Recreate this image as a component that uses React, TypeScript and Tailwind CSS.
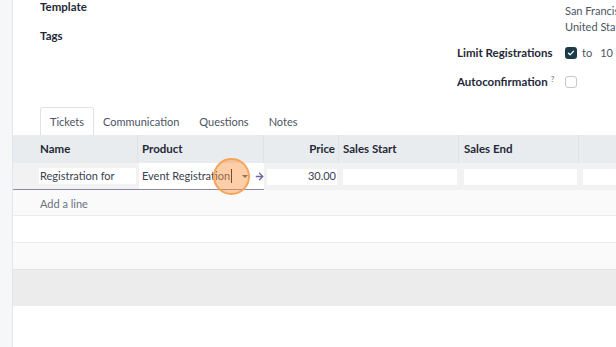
import { ArrowRight } from "lucide-react"

const cols = [
  { label: "Name", w: "w-[125px]", cls: "pl-[27px]" },
  { label: "Product", w: "w-[126px]", cls: "pl-[4px]" },
  { label: "Price", w: "w-[75px]", cls: "justify-end pr-[3px]" },
  { label: "Sales Start", w: "w-[120px]", cls: "pl-[4px]" },
  { label: "Sales End", w: "w-[120px]", cls: "pl-[5px]" },
  { label: "", w: "w-[120px]", cls: "pl-[4px]" },
]

export default function App() {
  return (
    <div
      className="flex h-[347px] w-[616px] overflow-hidden whitespace-nowrap bg-white text-[11px] text-[#374151]"
      style={{ fontFamily: "Lato, 'Open Sans', sans-serif" }}
    >
      {/* sidebar edge */}
      <div className="w-[13px] shrink-0 border-r border-[#e3e5ea] bg-[#f6f7f9]" />

      <div className="flex min-w-0 flex-1 flex-col">
        {/* form fields */}
        <div className="flex h-[107px] shrink-0">
          <div className="flex w-[444px] shrink-0 flex-col pl-[27px]">
            <div className="-mt-[2px] h-[29px] text-[11.5px] font-bold text-[#1f2937]">Template</div>
            <div className="text-[11.5px] font-bold text-[#1f2937]">Tags</div>
          </div>
          <div className="flex min-w-0 flex-1 flex-col overflow-hidden">
            <div className="pl-[108px] pt-[3px] leading-[16px] text-[#4b5563]">
              <div>San Francisco</div>
              <div>United States</div>
            </div>
            <div className="mt-[10px] flex h-[16px] items-center">
              <div className="w-[108px] text-[11.5px] font-bold text-[#1f2937]">Limit Registrations</div>
              <span className="flex h-[12px] w-[12px] items-center justify-center rounded-[3px] bg-[#1c3a47]">
                <svg viewBox="0 0 12 12" className="h-[10px] w-[10px]">
                  <path d="M3 6.2 5 8.2 9 3.8" fill="none" stroke="white" strokeWidth="1.6" strokeLinecap="round" strokeLinejoin="round" />
                </svg>
              </span>
              <span className="ml-[5px] text-[#4b5563]">to</span>
              <span className="ml-[8px] text-[#4b5563]">10</span>
            </div>
            <div className="mt-[13px] flex h-[16px] items-center">
              <div className="w-[108px] text-[11.5px] font-bold text-[#1f2937]">
                Autoconfirmation<sup className="ml-[3px] text-[8px] font-normal text-[#6b7280]">?</sup>
              </div>
              <span className="h-[12px] w-[12px] rounded-[3px] border border-[#c4c8ce] bg-white" />
            </div>
          </div>
        </div>

        {/* tabs */}
        <div className="flex h-[28px] shrink-0 items-stretch pl-[27px]">
          <div className="flex w-[54px] items-center justify-center rounded-t-[3px] border border-b-0 border-[#dee2e6] pt-[2px] text-[#4b5563]">
            Tickets
          </div>
          <div className="flex items-center pl-[9px] pr-[10px] pt-[2px] text-[#4b5563]">Communication</div>
          <div className="flex items-center pl-[10px] pr-[10px] pt-[2px] text-[#4b5563]">Questions</div>
          <div className="flex items-center pl-[10px] pt-[2px] text-[#4b5563]">Notes</div>
        </div>

        {/* table */}
        <div className="flex h-[28px] shrink-0 bg-[#e9ecef] text-[11.5px] font-bold text-[#1f2937]">
          {cols.map((c, i) => (
            <div key={i} className={`flex shrink-0 items-center border-r border-[#dfe3e7] ${c.w} ${c.cls}`}>
              {c.label}
            </div>
          ))}
        </div>

        <div className="flex h-[27px] shrink-0 items-center bg-[#f2f2f2]">
          <div className="flex h-full w-[251px] shrink-0 items-center border-b border-[#8e88a6]">
            <div className="ml-[26px] flex h-[16px] w-[97px] shrink-0 items-center bg-white pl-[1px] text-[#374151]">
              Registration for
            </div>
            <div className="ml-[3px] flex h-full w-[125px] shrink-0 items-center overflow-hidden bg-white pl-[3px] text-[#374151]">
              <span>Event Registration</span>
              <span className="ml-[1px] h-[14px] w-px shrink-0 bg-[#111]" />
              <span className="ml-[10px] h-0 w-0 shrink-0 border-x-[3px] border-t-[3px] border-x-transparent border-t-[#4b5563]" />
              <ArrowRight className="ml-[6px] h-[11px] w-[11px] shrink-0 text-[#6f63a3]" strokeWidth={2.75} />
            </div>
          </div>
          <div className="ml-[3px] flex h-[16px] w-[70px] shrink-0 items-center justify-end bg-white pr-[1px] text-[#374151]">
            30.00
          </div>
          <div className="ml-[6px] h-[16px] w-[114px] shrink-0 bg-white" />
          <div className="ml-[7px] h-[16px] w-[113px] shrink-0 bg-white" />
          <div className="ml-[6px] h-[16px] w-[120px] shrink-0 bg-white" />
        </div>

        <div className="flex h-[26px] shrink-0 items-center border-b border-[#e9ecef] bg-[#fafafa] pl-[27px] pt-[3px] text-[#6b7280]">
          Add a line
        </div>
        <div className="h-[27px] shrink-0 border-b border-[#eceef1] bg-white" />
        <div className="h-[27px] shrink-0 border-b border-[#e3e5e8] bg-[#fafafa]" />
        <div className="h-[36px] shrink-0 bg-[#ececec]" />
        <div className="flex-1 bg-white" />
      </div>

      {/* click highlight */}
      <div className="pointer-events-none absolute left-[213px] top-[158px] h-[37px] w-[37px] rounded-full border-2 border-[#f6a45a] bg-[#fb923c]/45" />
    </div>
  )
}
